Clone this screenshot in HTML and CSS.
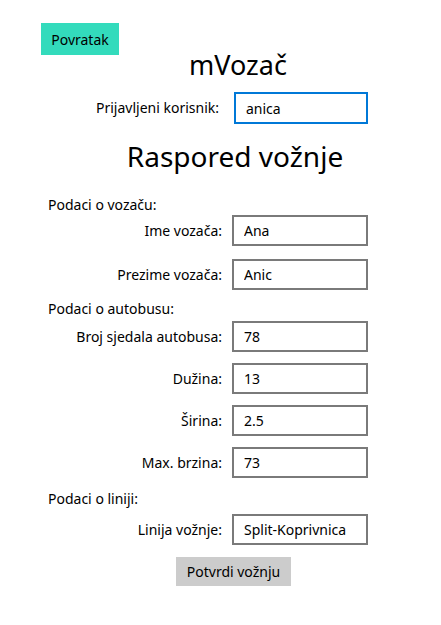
FILE: index.html
```html
<!DOCTYPE html>
<html lang="en">
<head>
    <meta charset="UTF-8">
    <meta name="viewport" content="width=device-width, initial-scale=1.0">
    <title>mVozač</title>
    <link rel="stylesheet" href="styles.css">
</head>
<body>
    <div class="page">
        <button class="back-button">Povratak</button>
        <h1 class="app-title">mVozač</h1>

        <div class="form-row user-row">
            <label for="korisnik">Prijavljeni korisnik:</label>
            <input type="text" id="korisnik" class="field active" value="anica">
        </div>

        <h2 class="page-title">Raspored vožnje</h2>

        <div class="section driver-section">
            <div class="section-title">Podaci o vozaču:</div>
            <div class="form-row">
                <label for="ime">Ime vozača:</label>
                <input type="text" id="ime" class="field" value="Ana">
            </div>
            <div class="form-row">
                <label for="prezime">Prezime vozača:</label>
                <input type="text" id="prezime" class="field" value="Anic">
            </div>
        </div>

        <div class="section bus-section">
            <div class="section-title">Podaci o autobusu:</div>
            <div class="form-row">
                <label for="sjedala">Broj sjedala autobusa:</label>
                <input type="text" id="sjedala" class="field" value="78">
            </div>
            <div class="form-row">
                <label for="duzina">Dužina:</label>
                <input type="text" id="duzina" class="field" value="13">
            </div>
            <div class="form-row">
                <label for="sirina">Širina:</label>
                <input type="text" id="sirina" class="field" value="2.5">
            </div>
            <div class="form-row">
                <label for="brzina">Max. brzina:</label>
                <input type="text" id="brzina" class="field" value="73">
            </div>
        </div>

        <div class="section line-section">
            <div class="section-title">Podaci o liniji:</div>
            <div class="form-row">
                <label for="linija">Linija vožnje:</label>
                <input type="text" id="linija" class="field" value="Split-Koprivnica">
            </div>
        </div>

        <div class="actions">
            <button class="confirm-button">Potvrdi vožnju</button>
        </div>
    </div>
</body>
</html>
```

FILE: styles.css
```css
body {
    margin: 0;
    background-color: #fff;
    font-family: "Noto Sans", "Open Sans", sans-serif;
    font-size: 14px;
    color: #000;
}

.page {
    padding: 23px 0 0 41px;
    width: 394px;
}

button {
    font-family: inherit;
    font-size: 14px;
    color: #000;
    border: none;
    cursor: pointer;
}

.back-button {
    display: block;
    width: 78px;
    height: 32px;
    padding: 0;
    background-color: #33dbbc;
}

.app-title {
    margin: 0;
    font-size: 27px;
    font-weight: normal;
    line-height: 20px;
    text-align: center;
}

.form-row {
    display: grid;
    grid-template-columns: 181px 136px;
    column-gap: 10px;
    align-items: center;
    margin-top: 11px;
}

.form-row label {
    line-height: 20px;
    text-align: right;
}

.user-row {
    margin-top: 17px;
    grid-template-columns: 178px 134px;
    column-gap: 15px;
}

.field {
    box-sizing: border-box;
    width: 136px;
    height: 31px;
    padding: 0 10px;
    border: 2px solid #7a7a7a;
    font-family: inherit;
    font-size: 14px;
    color: #000;
    outline: none;
}

.field.active {
    width: 134px;
    height: 32px;
    border-color: #0078d7;
}

.page-title {
    margin: 14px 0 0;
    padding-right: 6px;
    font-size: 28px;
    font-weight: normal;
    line-height: 36px;
    text-align: center;
}

.section-title {
    margin-left: 7px;
    line-height: 20px;
}

.driver-section {
    margin-top: 21px;
}

.driver-section .form-row:nth-child(2) {
    margin-top: 0;
}

.driver-section .form-row:nth-child(3) {
    margin-top: 13px;
}

.bus-section {
    margin-top: 9px;
}

.bus-section .form-row:nth-child(2) {
    margin-top: 2px;
}

.line-section {
    margin-top: 11px;
}

.line-section .form-row {
    margin-top: 5px;
}

.actions {
    margin-top: 12px;
    padding-left: 135px;
}

.confirm-button {
    width: 115px;
    height: 29px;
    padding: 0;
    background-color: #cccccc;
}
```
